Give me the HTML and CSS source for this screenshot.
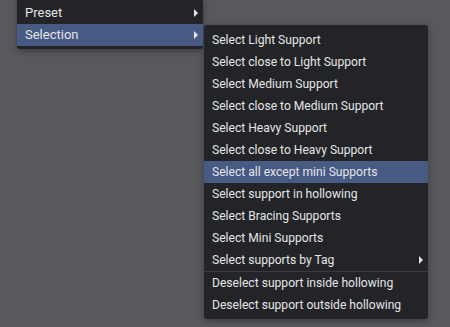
FILE: index.html
```html
<!DOCTYPE html>
<html lang="en">
  <head>
    <meta charset="UTF-8" />
    <meta name="viewport" content="width=device-width, initial-scale=1.0" />
    <title>Support Menu</title>
    <link rel="stylesheet" href="styles.css">
  </head>
  <body>
    <div class="menus">
      <ul class="menu main">
        <li class="item sub">Preset</li>
        <li class="item sub active">Selection</li>
      </ul>

      <ul class="menu submenu">
        <li class="item">Select Light Support</li>
        <li class="item">Select close to Light Support</li>
        <li class="item">Select Medium Support</li>
        <li class="item">Select close to Medium Support</li>
        <li class="item">Select Heavy Support</li>
        <li class="item">Select close to Heavy Support</li>
        <li class="item active">Select all except mini Supports</li>
        <li class="item">Select support in hollowing</li>
        <li class="item">Select Bracing Supports</li>
        <li class="item">Select Mini Supports</li>
        <li class="item sub">Select supports by Tag</li>
        <li class="separator"></li>
        <li class="item">Deselect support inside hollowing</li>
        <li class="item">Deselect support outside hollowing</li>
      </ul>
    </div>
  </body>
</html>
```

FILE: styles.css
```css
html, body {
    margin: 0;
    height: 100%;
    overflow: hidden;
}
body {
    background-color: #58595c;
    font-family: Roboto, "Liberation Sans", sans-serif;
    font-size: 12.1px;
    color: #e4e4e6;
}
.menus {
    display: flex;
    align-items: flex-start;
    gap: 1px;
    padding-left: 17px;
}
.menu {
    list-style: none;
    margin: 0;
    background-color: #232428;
    border-radius: 3px;
    box-shadow: 0 2px 6px rgba(0, 0, 0, 0.35);
}
.main {
    width: 186px;
    margin-top: -2px;
    padding: 4px 0 3px;
}
.submenu {
    width: 224px;
    margin-top: 25px;
    padding: 4px 0 3px;
}
.item {
    position: relative;
    height: 22px;
    line-height: 22px;
    padding-left: 8px;
    white-space: nowrap;
}
.main .item {
    font-size: 13px;
}
.item.active {
    background-color: #475a84;
}
.item.sub::after {
    content: "";
    position: absolute;
    right: 5px;
    top: 7px;
    border-left: 4px solid #e4e4e6;
    border-top: 4px solid transparent;
    border-bottom: 4px solid transparent;
}
.separator {
    height: 1px;
    background-color: #393a3f;
}
```
